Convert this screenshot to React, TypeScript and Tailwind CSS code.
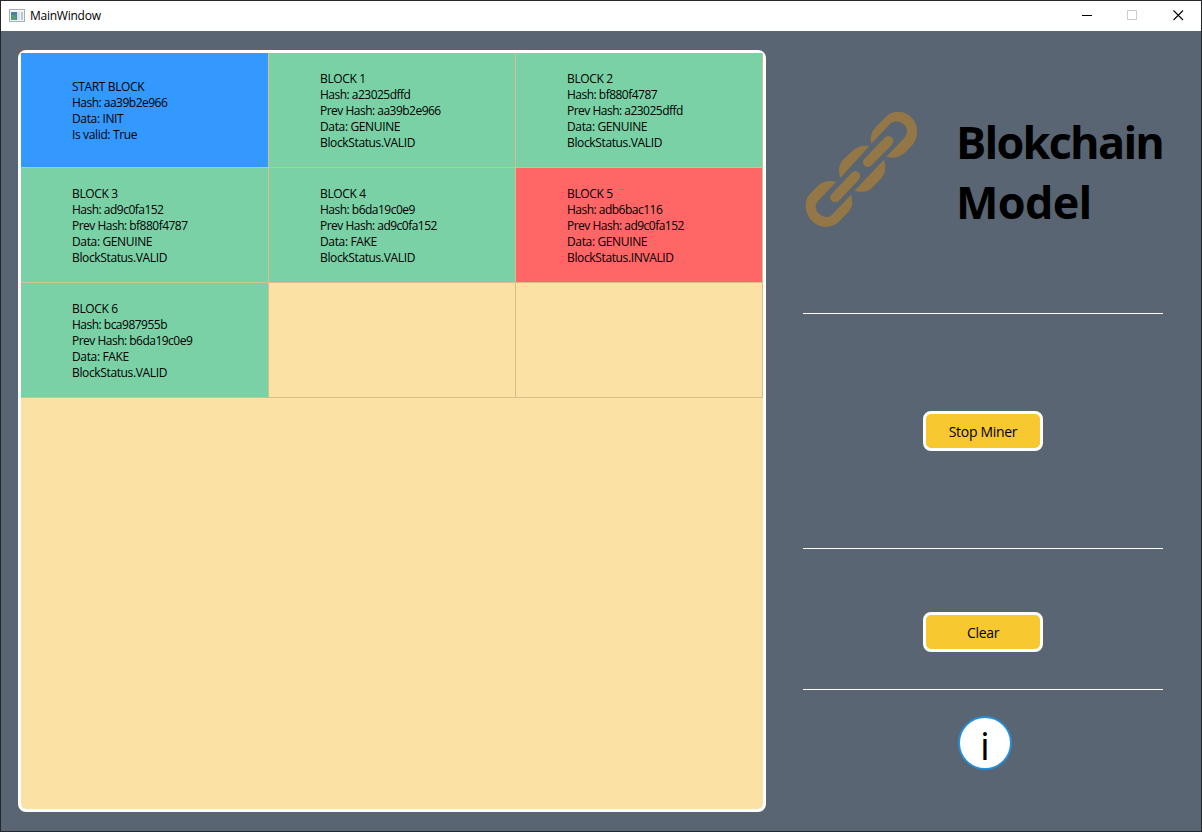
import React from "react";

type Status = "start" | "valid" | "invalid";

interface Block {
  lines: string[];
  status: Status;
}

const blocks: (Block | null)[] = [
  { status: "start", lines: ["START BLOCK", "Hash: aa39b2e966", "Data: INIT", "Is valid: True"] },
  { status: "valid", lines: ["BLOCK 1", "Hash: a23025dffd", "Prev Hash: aa39b2e966", "Data: GENUINE", "BlockStatus.VALID"] },
  { status: "valid", lines: ["BLOCK 2", "Hash: bf880f4787", "Prev Hash: a23025dffd", "Data: GENUINE", "BlockStatus.VALID"] },
  { status: "valid", lines: ["BLOCK 3", "Hash: ad9c0fa152", "Prev Hash: bf880f4787", "Data: GENUINE", "BlockStatus.VALID"] },
  { status: "valid", lines: ["BLOCK 4", "Hash: b6da19c0e9", "Prev Hash: ad9c0fa152", "Data: FAKE", "BlockStatus.VALID"] },
  { status: "invalid", lines: ["BLOCK 5", "Hash: adb6bac116", "Prev Hash: ad9c0fa152", "Data: GENUINE", "BlockStatus.INVALID"] },
  { status: "valid", lines: ["BLOCK 6", "Hash: bca987955b", "Prev Hash: b6da19c0e9", "Data: FAKE", "BlockStatus.VALID"] },
  null,
  null,
];

const fills: Record<Status, string> = {
  start: "bg-[#3399ff]",
  valid: "bg-[#7ad1a6]",
  invalid: "bg-[#ff6666]",
};

function BlockCell({ block }: { block: Block | null }) {
  return (
    <div
      className={`flex flex-col justify-center border-r border-b border-[#d7bf8b] pl-[51px] pt-[2px] text-[12px] leading-[16px] whitespace-nowrap ${
        block ? fills[block.status] : ""
      }`}
    >
      {block?.lines.map((line) => (
        <div key={line} className={line.includes("Hash") ? "tracking-[-0.51px]" : "tracking-[-0.36px]"}>
          {line}
        </div>
      ))}
    </div>
  );
}

function ChainIcon() {
  return (
    <svg className="h-[140px] w-[140px]" viewBox="0 0 420 420" fill="#937747">
      <path d="M244 131C239 111 244 96 257 82L288 50C304 34 333 29 357 46C383 65 390 101 370 132L346 157C332 171 309 177 289 170L342 115C351 105 354 94 349 83C342 67 318 58 302 70Z" />
      <path d="M151 234C143 208 148 190 161 178L190 150C203 138 220 135 238 138Z" />
      <path d="M282 179C290 203 285 224 272 237L246 263C232 277 211 278 193 272Z" />
      <path d="M139 245C119 240 100 243 86 255L59 283C43 300 43 330 58 353C78 383 117 390 145 367L174 337C188 322 190 305 183 284L126 344C116 354 100 353 88 342C75 331 73 316 84 303Z" />
      <path d="M225 175L283 114Q295 103 307 113Q314 123 304 136L245 196Q232 206 222 196Q214 186 225 175Z" />
      <path d="M127 280L184 219Q196 208 207 218Q215 228 205 241L147 302Q134 312 123 301Q116 291 127 280Z" />
    </svg>
  );
}

function TitleBar() {
  return (
    <header className="flex h-[30px] shrink-0 items-center bg-white">
      <svg className="ml-2 h-[14px] w-4" viewBox="0 0 16 14" shapeRendering="crispEdges">
        <path fill="#a7afb5" d="M0 0h16v13H0z" />
        <path fill="#f2f4f5" d="M1 1h14v11H1z" />
        <path fill="#4f80a0" d="M2 3h6v8H2z" />
        <path fill="#4f9d78" d="M2 6h5v5H2z" />
        <path fill="#dce4e8" d="M8 3h3v8H8z" />
        <path fill="#b9c7d1" d="M12 3h2v8h-2z" />
      </svg>
      <span className="ml-[5px] text-[12px] leading-4 tracking-[-0.25px]">MainWindow</span>
      <div className="-mr-px ml-auto flex">
        <svg className="h-[30px] w-[46px]" viewBox="0 0 46 30">
          <path d="M18 14.5h10" stroke="#000" />
        </svg>
        <svg className="h-[30px] w-[46px]" viewBox="0 0 46 30">
          <path d="M17.5 9.5h9v9h-9z" stroke="#ccc" fill="none" />
        </svg>
        <svg className="h-[30px] w-[46px]" viewBox="0 0 46 30">
          <path d="M17.5 9.5l9.5 9.5M27 9.5l-9.5 9.5" stroke="#000" strokeWidth="1.1" />
        </svg>
      </div>
    </header>
  );
}

function ActionButton({ children }: { children: React.ReactNode }) {
  return (
    <button className="h-10 w-[120px] rounded-[8px] border-[3px] border-white bg-[#f7c82f] pt-[1px] text-[14px] leading-5 tracking-[-0.3px]">
      {children}
    </button>
  );
}

export default function App() {
  return (
    <div className="flex h-[832px] w-[1202px] flex-col border border-[#25272b] bg-[#596572] font-['Open_Sans','Noto_Sans',sans-serif] text-black">
      <TitleBar />
      <main className="flex flex-1 pt-[19px] pl-[17px]">
        <section className="h-[762px] w-[748px] shrink-0 rounded-[8px] border-[3px] border-white bg-[#fce1a5]">
          <div className="grid grid-cols-[248px_247px_247px] grid-rows-[115px_115px_115px]">
            {blocks.map((block, i) => (
              <BlockCell key={i} block={block} />
            ))}
          </div>
        </section>
        <aside className="ml-[37px] flex w-[360px] flex-col items-center">
          <div className="flex h-[263px] w-full pt-[50px]">
            <div className="-ml-[13px] shrink-0">
              <ChainIcon />
            </div>
            <h1 className="ml-[26px] pt-[12px] text-[45px] leading-[60px] font-bold">
              <span className="block tracking-[-1.75px]">Blokchain</span>
              <span className="block tracking-[-0.7px]">Model</span>
            </h1>
          </div>
          <hr className="w-full border-t border-white" />
          <div className="flex h-[234px] items-center">
            <ActionButton>Stop Miner</ActionButton>
          </div>
          <hr className="w-full border-t border-white" />
          <div className="h-[140px] pt-[63px]">
            <ActionButton>Clear</ActionButton>
          </div>
          <hr className="w-full border-t border-white" />
          <button className="mt-[26px] ml-1 flex h-[54px] w-[54px] items-center justify-center rounded-full border-2 border-[#248fd9] bg-white pt-0.5 text-[39px] leading-none">
            i
          </button>
        </aside>
      </main>
    </div>
  );
}
